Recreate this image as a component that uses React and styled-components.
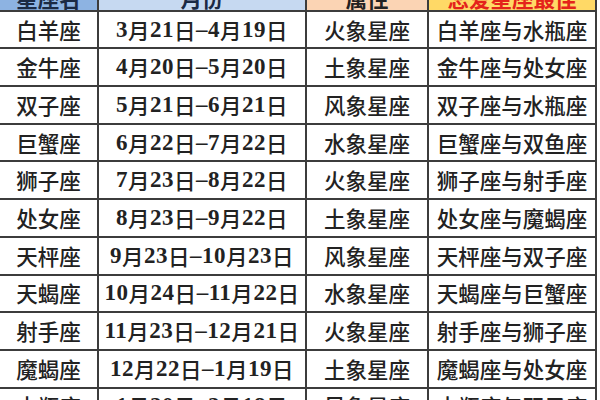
import React from "react";
import styled, { createGlobalStyle } from "styled-components";

const Global = createGlobalStyle`
  html, body { margin: 0; padding: 0; background: #ffffff; overflow: hidden; }
  body { width: 600px; height: 400px; }
`;

const Table = styled.div`
  display: grid;
  grid-template-columns: 99px 208px 122px 168px;
  grid-auto-rows: 37.7px;
  width: 597px;
  margin: -26px 0 0 -2px;
  border-left: 2px solid #3c3c3c;
  font-family: "Liberation Serif", "Noto Sans CJK SC", serif;
  font-size: 21.5px;
  color: #222;
`;

const Cell = styled.div`
  display: flex;
  align-items: ${(p) => (p.$head ? "flex-end" : "center")};
  justify-content: center;
  padding-bottom: ${(p) => (p.$head ? "1px" : "0")};
  border-right: 2px solid #3c3c3c;
  border-bottom: 2px solid #3c3c3c;
  background: ${(p) => p.$bg || "#ffffff"};
  color: ${(p) => p.$color || "#222"};
  line-height: 22px;
  white-space: nowrap;
  letter-spacing: ${(p) => p.$ls || "0"};
`;

const CJK = styled.span`
  font-family: "Noto Sans CJK SC", sans-serif;
  font-weight: ${(p) => (p.$bold ? 700 : 500)};
`;

const Num = styled.span`
  font-family: "Liberation Serif", serif;
  font-weight: 700;
  font-size: 23px;
`;

const headers = [
  { t: "星座名", bg: "#8db3e2", color: "#1b2a44" },
  { t: "月份", bg: "#c6d9f1", color: "#1b2a44" },
  { t: "属性", bg: "#fbd4b4", color: "#222" },
  { t: "恋爱星座最佳", bg: "#ffd966", color: "#e4231b" },
];

const rows = [
  ["白羊座", "3月21日-4月19日", "火象星座", "白羊座与水瓶座"],
  ["金牛座", "4月20日-5月20日", "土象星座", "金牛座与处女座"],
  ["双子座", "5月21日-6月21日", "风象星座", "双子座与水瓶座"],
  ["巨蟹座", "6月22日-7月22日", "水象星座", "巨蟹座与双鱼座"],
  ["狮子座", "7月23日-8月22日", "火象星座", "狮子座与射手座"],
  ["处女座", "8月23日-9月22日", "土象星座", "处女座与魔蝎座"],
  ["天枰座", "9月23日-10月23日", "风象星座", "天枰座与双子座"],
  ["天蝎座", "10月24日-11月22日", "水象星座", "天蝎座与巨蟹座"],
  ["射手座", "11月23日-12月21日", "火象星座", "射手座与狮子座"],
  ["魔蝎座", "12月22日-1月19日", "土象星座", "魔蝎座与处女座"],
  ["水瓶座", "1月20日-2月18日", "风象星座", "水瓶座与双子座"],
];

function DateText({ text }) {
  const parts = text.split(/(\d+|-)/).filter(Boolean);
  return parts.map((p, i) =>
    /^\d+$/.test(p) || p === "-" ? (
      <Num key={i}>{p === "-" ? "–" : p}</Num>
    ) : (
      <CJK key={i}>{p}</CJK>
    )
  );
}

export default function App() {
  return (
    <>
      <Global />
      <Table>
        {headers.map((h) => (
          <Cell key={h.t} $head $bg={h.bg} $color={h.color}>
            <CJK $bold>{h.t}</CJK>
          </Cell>
        ))}
        {rows.map((r) => (
          <React.Fragment key={r[0]}>
            <Cell><CJK>{r[0]}</CJK></Cell>
            <Cell $ls="0.5px"><DateText text={r[1]} /></Cell>
            <Cell><CJK>{r[2]}</CJK></Cell>
            <Cell><CJK>{r[3]}</CJK></Cell>
          </React.Fragment>
        ))}
      </Table>
    </>
  );
}
